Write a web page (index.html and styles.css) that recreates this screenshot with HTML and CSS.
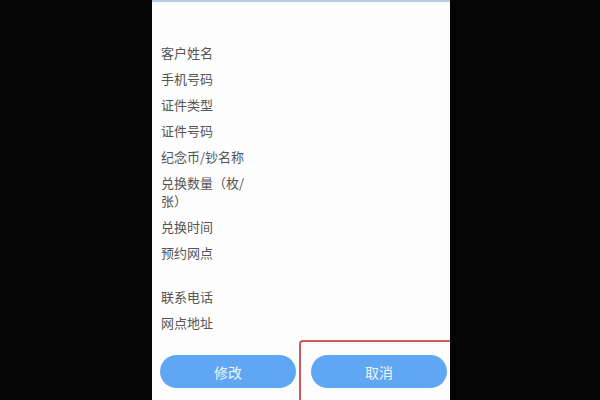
FILE: index.html
```html
<!DOCTYPE html>
<html lang="zh">
<head>
<meta charset="utf-8">
<link rel="stylesheet" href="styles.css">
</head>
<body>
<div class="panel">
  <div class="list">
    <div class="row"><span class="label">客户姓名</span></div>
    <div class="row"><span class="label">手机号码</span></div>
    <div class="row"><span class="label">证件类型</span></div>
    <div class="row"><span class="label">证件号码</span></div>
    <div class="row"><span class="label">纪念币/钞名称</span></div>
    <div class="row"><span class="label">兑换数量（枚/张）</span></div>
    <div class="row"><span class="label">兑换时间</span></div>
    <div class="row tall"><span class="label">预约网点</span></div>
    <div class="row"><span class="label">联系电话</span></div>
    <div class="row"><span class="label">网点地址</span></div>
  </div>
  <div class="actions">
    <button class="btn">修改</button>
    <button class="btn">取消</button>
  </div>
  <div class="highlight"></div>
</div>
</body>
</html>
```

FILE: styles.css
```css
html, body {
  margin: 0;
  padding: 0;
  background: #050505;
  width: 600px;
  height: 400px;
  overflow: hidden;
  font-family: "Noto Sans CJK SC", "Noto Sans", sans-serif;
}
.panel {
  position: relative;
  margin-left: 152px;
  width: 298px;
  height: 400px;
  background: #fdfdfd;
  border-top: 2px solid #b4cbe0;
  box-sizing: border-box;
  display: flex;
  flex-direction: column;
  overflow: hidden;
}
.list {
  padding: 42px 0 0 9px;
  display: flex;
  flex-direction: column;
  gap: 8px;
}
.row {
  display: flex;
  font-size: 13px;
  line-height: 18px;
  color: #555;
}
.row.tall {
  height: 36px;
}
.label {
  width: 92px;
}
.actions {
  margin-top: auto;
  display: flex;
  gap: 15px;
  padding: 0 3px 12px 8px;
}
.btn {
  width: 136px;
  height: 33px;
  border: none;
  border-radius: 17px;
  background: #60a7f3;
  color: #eef5fd;
  font-family: inherit;
  font-size: 14px;
  padding: 0;
}
.highlight {
  position: absolute;
  left: 147px;
  top: 338px;
  width: 160px;
  height: 80px;
  border: 2px solid #cf5a5e;
  border-radius: 4px;
  box-sizing: border-box;
}
```
